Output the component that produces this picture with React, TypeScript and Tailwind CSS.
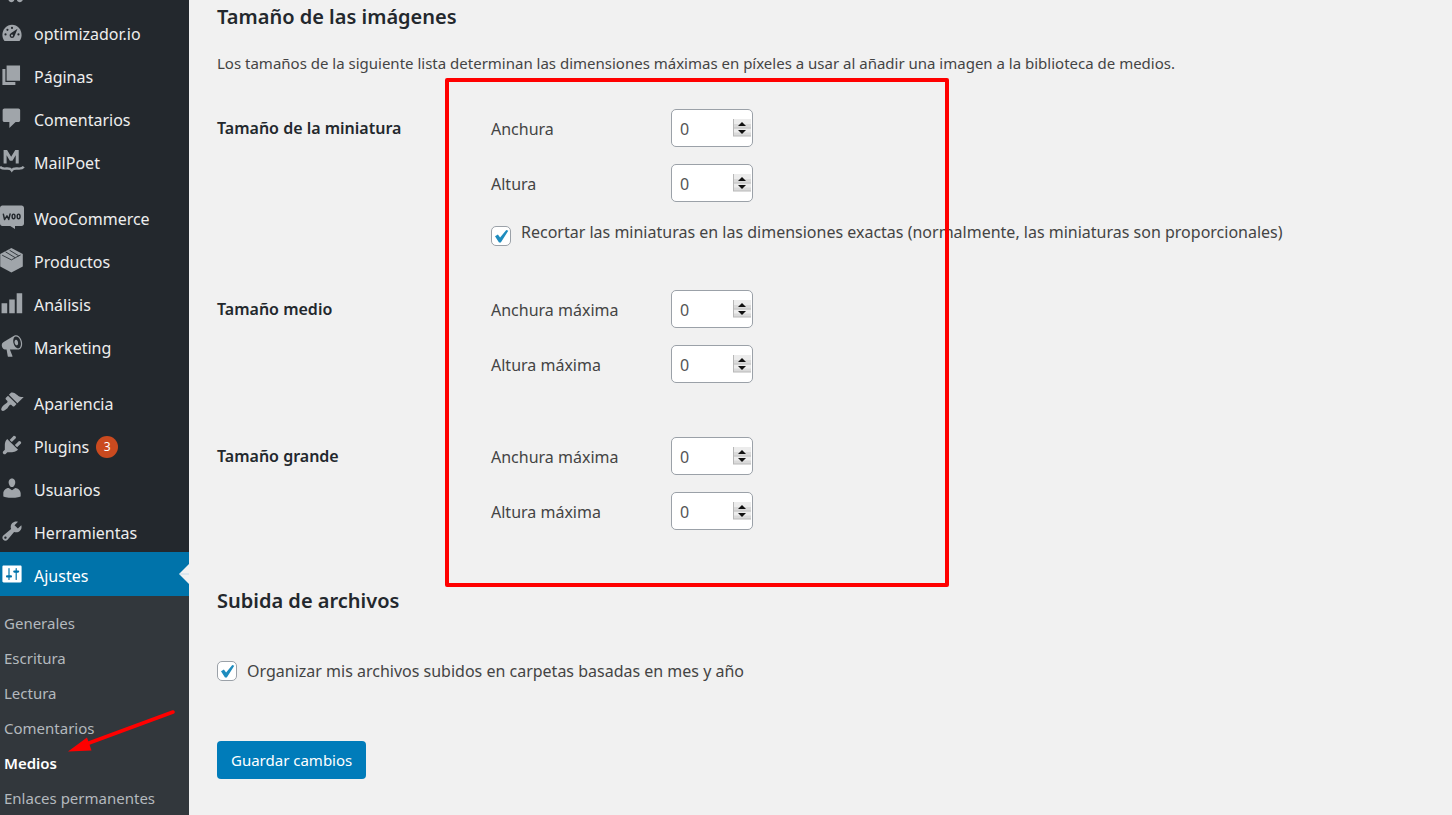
import React, { useState } from 'react';

interface MenuEntry {
  label: string;
  icon: React.ReactNode;
  active?: boolean;
  badge?: number;
  iconOnly?: boolean;
}

interface SizeField {
  id: string;
  label: string;
}

const mediaIcon = (
  <path transform="translate(0 2)" d="M13 11V4c0-.55-.45-1-1-1h-1.670L9 1H5L3.670 3H2c-.55 0-1 .45-1 1v7c0 .55.45 1 1 1h10c.55 0 1-.45 1-1zM7 4.500c1.380 0 2.500 1.120 2.500 2.500S8.380 9.500 7 9.500 4.500 8.380 4.500 7 5.620 4.500 7 4.500zM14 6h5v10.500c0 1.380-1.120 2.500-2.500 2.500S14 17.880 14 16.500s1.120-2.500 2.500-2.500c.17 0 .34.02.5.05V9h-3V6zm-4 8.050V13h2v3.500c0 1.380-1.120 2.500-2.500 2.500S7 17.880 7 16.500 8.120 14 9.500 14c.17 0 .34.02.5.05z" />
);

const dashboardIcon = (
  <>
    <path d="M3.760 17.500h12.480c1.100-1.370 1.760-3.110 1.760-5 0-4.700-3.580-8.500-8-8.500s-8 3.800-8 8.500c0 1.890.66 3.630 1.760 5z" />
    <g fill="#23282d">
      <circle cx="10" cy="6.600" r="0.9" />
      <circle cx="6.200" cy="8.200" r="0.9" />
      <circle cx="4.600" cy="12" r="0.9" />
      <circle cx="15.400" cy="12" r="0.9" />
      <path d="M14.600 7.300l-2.300 5.600c-.4 1.400-1.200 2.100-2.300 2.100a2.100 2.100 0 0 1-1-3.900z" />
    </g>
    <circle cx="10" cy="13" r="0.9" />
  </>
);

const pagesIcon = <path d="M5.500 14.800V2h11.200v12.800H5.500zM4.500 15.900h8.300v2.500H2V5h2.500v10.900z" />;

const commentIcon = (
  <path d="M3.700 2h11.600c.8 0 1.500.7 1.500 1.500v8.300c0 .8-.7 1.500-1.500 1.500H13l-5.200 5v-5H3.700c-.8 0-1.500-.7-1.500-1.500V3.500c0-.8.7-1.500 1.500-1.500z" />
);

const mailpoetIcon = (
  <>
    <path d="M3 12V.8h2.900l3.400 5.700L12.700.8h2.900V12h-2.500V5.200l-2.700 4.600H8.200L5.500 5.200V12z" />
    <path d="M0 14.800c1.200 1.700 3.200 1.700 5.200 1.500 2.200-.2 3.600-.1 4.600 1.500 1-1.600 2.600-1.700 4.800-1.500 2 .2 4 .2 5.200-1.500" fill="none" stroke="currentColor" strokeWidth="2" />
  </>
);

const wooIcon = (
  <>
    <path d="M2 .5h16c1.100 0 2 .9 2 2v13c0 1.100-.9 2-2 2h-5.500v2.500l-4-2.500H2c-1.100 0-2-.9-2-2v-13c0-1.100.9-2 2-2z" />
    <g fill="none" stroke="#23282d" strokeWidth="1.200" strokeLinecap="round" strokeLinejoin="round">
      <path d="M2.800 7.700l1 4.400L5.800 9l1.500 3.100L8.400 7.500" />
      <ellipse cx="11.300" cy="9.500" rx="1.200" ry="1.900" />
      <ellipse cx="15.500" cy="9.500" rx="1.200" ry="1.900" />
    </g>
  </>
);

const boxIcon = (
  <>
    <path d="M9.500 0L19 5v10.500L9.500 20.500.2 15.500V5z" />
    <path d="M1.800 6L9.500 9.900l3.200-1.700M4.600 3.200l8.100 4.900 4.500-2.300M8 1.900l7.600 4.600" fill="none" stroke="#23282d" strokeWidth="0.700" />
  </>
);

const chartIcon = <path d="M18.500 18.500V1.800h-4.600v16.700zM12.300 18.500V7H7.700v11.500zM6 18.500v-8.300H1.300v8.300z" />;

const megaphoneIcon = (
  <path d="M18.150 5.940c.46 1.620.38 3.220-.02 4.480-.42 1.280-1.260 2.180-2.300 2.480-.16.06-.26.06-.4.06-.06.02-.12.02-.18.02-.06.02-.14.02-.22.02h-6.800l2.220 5.500c.02.14-.06.26-.14.34-.08.1-.24.16-.34.16H6.950c-.1 0-.26-.06-.34-.16-.08-.08-.16-.2-.14-.34l-1-5.500H4.250l-.02-.02c-.5.06-1.080-.18-1.540-.62s-.88-1.080-1.060-1.880c-.24-.8-.2-1.560-.02-2.200.18-.62.58-1.080 1.060-1.300l.02-.02 9-5.400c.1-.06.18-.1.24-.16.06-.04.14-.08.24-.12.16-.08.28-.12.5-.18 1.040-.3 2.240.1 3.220.98s1.840 2.240 2.260 3.860zm-2.580 5.980h-.02c.4-.1.74-.34 1.040-.7.58-.7.86-1.760.86-3.040 0-.64-.1-1.300-.28-1.980-.34-1.360-1.020-2.500-1.780-3.240s-1.680-1.100-2.460-.88c-.82.22-1.400.96-1.700 2-.32 1.040-.28 2.360.06 3.720.38 1.360 1 2.500 1.800 3.240.78.74 1.620 1.100 2.480.88zm-2.540-7.080c.22-.04.42-.02.62.04.38.16.76.48 1.020 1s.42 1.200.42 1.780c0 .3-.04.56-.12.8-.18.48-.44.84-.86.94-.34.1-.8-.06-1.140-.4s-.64-.86-.78-1.500c-.18-.62-.12-1.240.02-1.720s.48-.84.82-.94z" />
);

const brushIcon = (
  <path d="M14.480 11.060L7.410 3.990l1.500-1.500c.5-.56 2.300-.47 3.510.32 1.210.8 1.430 1.280 2.910 2.100 1.180.64 2.450 1.260 4.450.85zm-.71.71L6.700 4.700 4.930 6.470c-.39.39-.39 1.020 0 1.410l1.060 1.060c.39.39.39 1.030 0 1.420-.6.6-1.430 1.110-2.210 1.690-.35.26-.7.53-1.010.84C1.430 14.230.4 16.080 1.400 17.070c.99 1 2.840-.03 4.180-1.360.31-.31.58-.66.85-1.020.57-.78 1.080-1.610 1.690-2.210.39-.39 1.020-.39 1.410 0l1.060 1.060c.39.39 1.020.39 1.410 0z" />
);

const plugIcon = (
  <path d="M13.110 4.360L9.870 7.600 8 5.730l3.240-3.240c.35-.34 1.050-.2 1.560.32.52.51.66 1.210.31 1.550zm-8 1.770l.91-1.120 9.010 9.010-1.190.84c-.71.71-2.630 1.160-3.820 1.160H6.140L4.900 17.260c-.59.59-1.540.59-2.120 0-.59-.58-.59-1.530 0-2.120l1.240-1.240v-3.880c0-1.130.4-3.190 1.090-3.890zm7.260 3.970l3.240-3.240c.34-.35 1.040-.21 1.550.31.52.51.66 1.210.31 1.550l-3.240 3.250z" />
);

const userIcon = (
  <path d="M10 9.250c-2.270 0-2.730-3.440-2.730-3.440C7 4.020 7.820 2 9.970 2c2.160 0 2.980 2.020 2.710 3.810 0 0-.41 3.440-2.680 3.440zm0 2.570L12.720 10c2.390 0 4.520 2.330 4.520 4.530v2.490s-3.650 1.130-7.240 1.130c-3.650 0-7.240-1.130-7.240-1.130v-2.490c0-2.250 1.940-4.480 4.470-4.480z" />
);

const wrenchIcon = (
  <path d="M16.680 9.770c-1.340 1.340-3.300 1.670-4.950.99l-5.410 6.520c-.99.99-2.590.99-3.580 0s-.99-2.590 0-3.570l6.520-5.420c-.68-1.650-.35-3.610.99-4.950 1.280-1.280 3.120-1.620 4.720-1.060l-2.890 2.890 2.820 2.820 2.860-2.870c.53 1.580.18 3.390-1.080 4.650zM3.810 16.210c.4.39 1.040.39 1.430 0 .4-.4.4-1.040 0-1.430-.39-.4-1.030-.4-1.430 0-.39.39-.39 1.030 0 1.430z" />
);

const settingsIcon = (
  <path d="M18 16V4c0-.55-.45-1-1-1H3c-.55 0-1 .45-1 1v12c0 .55.45 1 1 1h14c.55 0 1-.45 1-1zM8 11h1c.55 0 1 .45 1 1s-.45 1-1 1H8v1.500c0 .28-.22.5-.5.5s-.5-.22-.5-.5V13H6c-.55 0-1-.45-1-1s.45-1 1-1h1V5.500c0-.28.22-.5.5-.5s.5.22.5.5V11zm5-2h-1c-.55 0-1-.45-1-1s.45-1 1-1h1V5.500c0-.28.22-.5.5-.5s.5.22.5.5V7h1c.55 0 1 .45 1 1s-.45 1-1 1h-1v5.500c0 .28-.22.5-.5.5s-.5-.22-.5-.5V9z" />
);

const MENU_GROUPS: MenuEntry[][] = [
  [
    { label: 'Medios', icon: mediaIcon, iconOnly: true },
    { label: 'optimizador.io', icon: dashboardIcon },
    { label: 'Páginas', icon: pagesIcon },
    { label: 'Comentarios', icon: commentIcon },
    { label: 'MailPoet', icon: mailpoetIcon }
  ],
  [
    { label: 'WooCommerce', icon: wooIcon },
    { label: 'Productos', icon: boxIcon },
    { label: 'Análisis', icon: chartIcon },
    { label: 'Marketing', icon: megaphoneIcon }
  ],
  [
    { label: 'Apariencia', icon: brushIcon },
    { label: 'Plugins', icon: plugIcon, badge: 3 },
    { label: 'Usuarios', icon: userIcon },
    { label: 'Herramientas', icon: wrenchIcon },
    { label: 'Ajustes', icon: settingsIcon, active: true }
  ]
];

const SUBMENU = ['Generales', 'Escritura', 'Lectura', 'Comentarios', 'Medios', 'Enlaces permanentes'];

const MenuItem: React.FC<{ entry: MenuEntry }> = ({ entry }) => (
  <li>
    <a
      href="#"
      aria-label={entry.label}
      className={`relative flex items-center ${entry.active ? 'h-11 bg-[#0073aa] text-white' : 'h-[43px] text-[#eeeeee]'}`}
    >
      <svg viewBox="0 0 20 20" className={`w-6 h-6 shrink-0 fill-current overflow-visible ${entry.active ? 'text-white' : 'text-[#a0a5aa]'}`}>
        {entry.icon}
      </svg>
      {!entry.iconOnly && <span className="pl-[10px] pt-1 text-base leading-6">{entry.label}</span>}
      {entry.badge && (
        <span className="ml-[7px] mt-1 flex items-center justify-center w-[22px] h-[22px] rounded-full bg-[#ca4a1f] text-white text-xs">
          {entry.badge}
        </span>
      )}
      {entry.active && (
        <svg viewBox="0 0 10 20" className="absolute right-0 top-3 w-[10px] h-5 fill-[#f1f1f1]">
          <path d="M10 0v20L0 10z" />
          <path d="M1 10h9" stroke="#c5dcea" />
        </svg>
      )}
    </a>
  </li>
);

const Sidebar: React.FC = () => (
  <nav className="relative w-[189px] shrink-0 bg-[#23282d] overflow-hidden">
    <div className="-mt-[33px]">
      <div className="flex flex-col gap-[13px]">
        {MENU_GROUPS.map((group, idx) => (
          <ul key={idx}>
            {group.map(entry => <MenuItem key={entry.label} entry={entry} />)}
          </ul>
        ))}
      </div>
      <ul className="bg-[#32373c] pt-[10px] pb-4">
        {SUBMENU.map(label => (
          <li key={label}>
            <a
              href="#"
              className={`block pl-1 text-[15px] leading-[35px] whitespace-nowrap ${label === 'Medios' ? 'font-semibold text-white' : 'text-[#b4b9be]'}`}
            >
              {label}
            </a>
          </li>
        ))}
      </ul>
    </div>
    {/* Pointer to the current submenu entry */}
    <svg viewBox="0 0 110 46" className="absolute left-[67px] top-[709px] w-[110px] h-[46px]">
      <path d="M106 3L22 34" stroke="#ff0000" strokeWidth="3.500" strokeLinecap="round" />
      <path d="M1 42.500L20 28.500 24.500 41.500z" fill="#ff0000" />
    </svg>
  </nav>
);

const NumberField: React.FC<{ field: SizeField }> = ({ field }) => {
  const [value, setValue] = useState(0);

  return (
    <div className="flex items-center h-[38px]">
      <label htmlFor={field.id} className="w-[180px] pt-0.5">{field.label}</label>
      <div className="relative">
        <input
          id={field.id}
          type="number"
          min={0}
          value={value}
          onChange={(e) => setValue(Number(e.target.value))}
          className="block w-[82px] h-[38px] pt-0.5 pl-2 pr-5 bg-white border border-[#9ba1a8] rounded-[5px] text-base text-[#555555] appearance-none [appearance:textfield] [&::-webkit-inner-spin-button]:appearance-none"
        />
        <svg viewBox="0 0 18 18" className="absolute right-0.5 top-[10px] w-[18px] h-[18px] pointer-events-none">
          <path d="M0 0h18v17H0z" fill="#ececec" />
          <path d="M0 5h18v3.500H0zM0 13.500h18V17H0z" fill="#dadada" />
          <path d="M0 9h18M0 17h18M.5 0v17" stroke="#b8b8b8" fill="none" />
          <path d="M9 3L13 7H5zM9 15L5 11h8z" fill="#111111" />
        </svg>
      </div>
    </div>
  );
};

const CheckField: React.FC<{ id: string; label: string; high?: boolean }> = ({ id, label, high }) => (
  <div className="flex gap-[10px]">
    <span className="relative w-5 h-5 shrink-0">
      <input
        id={id}
        type="checkbox"
        defaultChecked
        className="peer block w-5 h-5 appearance-none bg-white border border-[#9ba1a8] rounded-[5px]"
      />
      <svg viewBox="0 0 20 20" className="absolute inset-0 w-5 h-5 pointer-events-none opacity-0 peer-checked:opacity-100">
        <path d="M4 10.200l2.900-1.600 2.200 3L15.300 4l2 .8L9.800 16.500H8z" fill="#1e8cbe" />
      </svg>
    </span>
    <label htmlFor={id} className={high ? '-mt-1.5 leading-6 whitespace-nowrap' : '-mt-0.5 leading-6'}>{label}</label>
  </div>
);

const SizeRow: React.FC<{ title: string; fields: SizeField[]; children?: React.ReactNode }> = ({ title, fields, children }) => (
  <fieldset className="flex">
    <legend className="float-left w-[274px] shrink-0 text-base leading-[38px] font-semibold text-[#23282d]">{title}</legend>
    <div>
      <div className="flex flex-col gap-[17px]">
        {fields.map(field => <NumberField key={field.id} field={field} />)}
      </div>
      {children}
    </div>
  </fieldset>
);

const App: React.FC = () => {
  return (
    <div className="flex h-screen overflow-hidden bg-[#f1f1f1] text-base text-[#444444] font-['Noto_Sans','Open_Sans',sans-serif]">
      <Sidebar />

      <main className="flex-1 min-w-0 pl-7 pr-6 pt-0.5">
        <form onSubmit={(e) => e.preventDefault()}>
          <h2 className="text-xl leading-[30px] font-semibold text-[#23282d]">Tamaño de las imágenes</h2>
          <p className="mt-[19px] text-[15px] leading-6">
            Los tamaños de la siguiente lista determinan las dimensiones máximas en píxeles a usar al añadir una imagen a la biblioteca de medios.
          </p>

          <div className="relative mt-[34px] flex flex-col">
            <SizeRow
              title="Tamaño de la miniatura"
              fields={[
                { id: 'thumb-w', label: 'Anchura' },
                { id: 'thumb-h', label: 'Altura' }
              ]}
            >
              <div className="mt-6">
                <CheckField
                  id="thumb-crop"
                  label="Recortar las miniaturas en las dimensiones exactas (normalmente, las miniaturas son proporcionales)"
                  high
                />
              </div>
            </SizeRow>
            <div className="mt-11">
              <SizeRow
                title="Tamaño medio"
                fields={[
                  { id: 'medium-w', label: 'Anchura máxima' },
                  { id: 'medium-h', label: 'Altura máxima' }
                ]}
              />
            </div>
            <div className="mt-[54px]">
              <SizeRow
                title="Tamaño grande"
                fields={[
                  { id: 'large-w', label: 'Anchura máxima' },
                  { id: 'large-h', label: 'Altura máxima' }
                ]}
              />
            </div>

            {/* Highlight frame around the size inputs */}
            <div className="absolute left-[228px] -top-[31px] -bottom-[57px] w-[504px] border-4 border-[#ff0000] rounded-xs pointer-events-none" />
          </div>

          <h2 className="mt-14 text-xl leading-[30px] font-semibold text-[#23282d]">Subida de archivos</h2>
          <div className="mt-[45px]">
            <CheckField id="uploads-folders" label="Organizar mis archivos subidos en carpetas basadas en mes y año" />
          </div>

          <button
            type="submit"
            className="mt-[58px] h-[38px] px-[14px] rounded-[4px] bg-[#007cba] text-white text-[15px]"
          >
            Guardar cambios
          </button>
        </form>
      </main>
    </div>
  );
};

export default App;
